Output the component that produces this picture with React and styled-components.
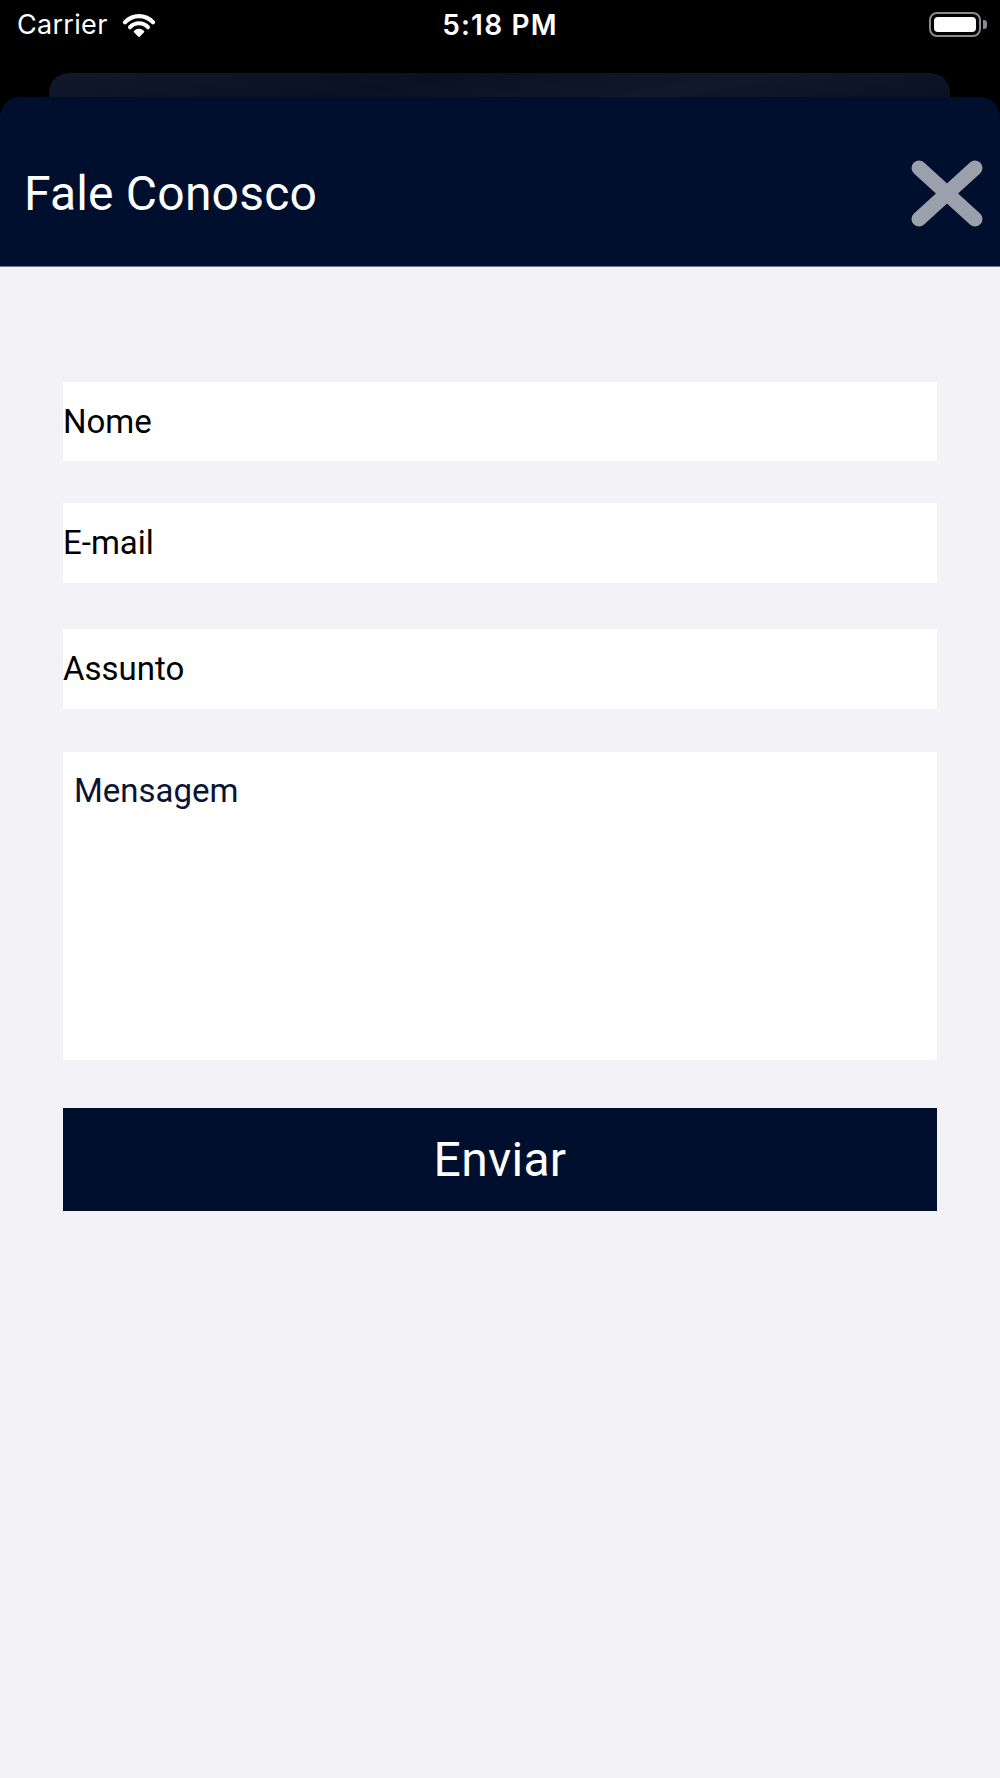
import React from "react";
import styled, { createGlobalStyle } from "styled-components";

const GlobalStyle = createGlobalStyle`
  html, body { margin: 0; padding: 0; background: #f2f2f7; }
  body { font-family: Roboto, "Noto Sans", sans-serif; -webkit-font-smoothing: antialiased; }
  #root { min-height: 100vh; }
  * { box-sizing: border-box; }
`;

const Screen = styled.div`
  min-height: 1778px;
  background: #f2f2f7;
  display: flex;
  flex-direction: column;
`;

const Top = styled.div`
  background: #000;
  display: flex;
  flex-direction: column;
`;

const StatusBar = styled.div`
  height: 73px;
  padding: 9px 13px 0 17px;
  display: grid;
  grid-template-columns: 1fr auto 1fr;
  align-items: start;
  color: #fff;
  font-family: Inter, "Noto Sans", sans-serif;
  font-size: 27px;
  line-height: 32px;
`;

const LeftGroup = styled.div`
  display: flex;
  align-items: flex-start;
  gap: 12px;
`;

const Carrier = styled.span`
  font-weight: 400;
  letter-spacing: 0.3px;
`;

const WifiIcon = styled.svg`
  margin-top: 4px;
  width: 38px;
  height: 25px;
`;

const Time = styled.span`
  font-weight: 600;
  font-size: 28px;
  letter-spacing: 1.2px;
  margin-left: -4px;
`;

const Battery = styled.div`
  justify-self: end;
  margin-top: 3px;
  display: flex;
  align-items: center;
  gap: 2px;
`;

const BatteryBody = styled.div`
  width: 52px;
  height: 25px;
  border: 2.5px solid #8a8a8e;
  border-radius: 8px;
  padding: 3px;
`;

const BatteryFill = styled.div`
  width: 100%;
  height: 100%;
  background: #fff;
  border-radius: 4px;
`;

const BatteryNub = styled.div`
  width: 4px;
  height: 9px;
  background: #8a8a8e;
  border-radius: 0 3px 3px 0;
`;

const BackCard = styled.div`
  height: 24px;
  margin: 0 50px 0 49px;
  border-radius: 20px 20px 0 0;
  background:
    linear-gradient(170deg, rgba(255,255,255,0.03) 0%, rgba(255,255,255,0) 40%, rgba(255,255,255,0.03) 70%, rgba(255,255,255,0) 100%),
    #0a1124;
`;

const Header = styled.header`
  height: 170px;
  padding: 24px 17px 0 24px;
  background: #000f2e;
  border-radius: 20px 20px 0 0;
  border-bottom: 1px solid #6d7385;
  display: flex;
  align-items: center;
  justify-content: space-between;
`;

const Title = styled.h1`
  margin: 0;
  font-family: Roboto, "Noto Sans", sans-serif;
  font-weight: 400;
  font-size: 48px;
  line-height: 56px;
  letter-spacing: 0.2px;
  color: #fff;
`;

const CloseButton = styled.button`
  border: none;
  background: none;
  padding: 0;
  display: flex;
  cursor: pointer;
`;

const Form = styled.form`
  display: flex;
  flex-direction: column;
  padding: 115px 63px 0;
`;

const Field = styled.div`
  margin-top: ${(p) => p.$top || 0}px;
  height: ${(p) => p.$h || 80}px;
  background: #fff;
  display: flex;
  align-items: ${(p) => (p.$multiline ? "flex-start" : "center")};
  padding: ${(p) => (p.$multiline ? "20px 11px" : "0")};
  font-family: Roboto, "Noto Sans", sans-serif;
  font-size: 33px;
  line-height: 38px;
  color: ${(p) => (p.$multiline ? "#0b1433" : "#000")};
`;

const SubmitButton = styled.button`
  margin-top: 48px;
  height: 103px;
  width: 100%;
  border: none;
  background: #000f2e;
  color: #fff;
  font-family: Roboto, "Noto Sans", sans-serif;
  font-size: 48px;
  font-weight: 400;
  letter-spacing: 0.3px;
  cursor: pointer;
`;

export default function App() {
  return (
    <>
      <GlobalStyle />
      <Screen>
        <Top>
          <StatusBar>
            <LeftGroup>
              <Carrier>Carrier</Carrier>
              <WifiIcon viewBox="0 0 37 25" fill="none">
                <path d="M4.4 9.3 A19 19 0 0 1 32.6 9.3" stroke="#fff" strokeWidth="4.2" strokeLinecap="round" />
                <path d="M9.6 14.2 A12 12 0 0 1 27.4 14.2" stroke="#fff" strokeWidth="4.2" strokeLinecap="round" />
                <path d="M18.5 23 L14.2 18.6 A6 6 0 0 1 22.8 18.6 Z" fill="#fff" stroke="#fff" strokeWidth="2" strokeLinejoin="round" />
              </WifiIcon>
            </LeftGroup>
            <Time>5:18 PM</Time>
            <Battery>
              <BatteryBody>
                <BatteryFill />
              </BatteryBody>
              <BatteryNub />
            </Battery>
          </StatusBar>
          <BackCard />
          <Header>
            <Title>Fale Conosco</Title>
            <CloseButton type="button" aria-label="Fechar">
              <svg width="72" height="67" viewBox="0 0 72 67">
                <path d="M8 8 L64 59 M64 8 L8 59" stroke="#9ba0ad" strokeWidth="15" strokeLinecap="round" />
              </svg>
            </CloseButton>
          </Header>
        </Top>
        <Form onSubmit={(e) => e.preventDefault()}>
          <Field $h={79}>Nome</Field>
          <Field $top={42}>E-mail</Field>
          <Field $top={46}>Assunto</Field>
          <Field $top={43} $h={308} $multiline>Mensagem</Field>
          <SubmitButton type="submit">Enviar</SubmitButton>
        </Form>
      </Screen>
    </>
  );
}
